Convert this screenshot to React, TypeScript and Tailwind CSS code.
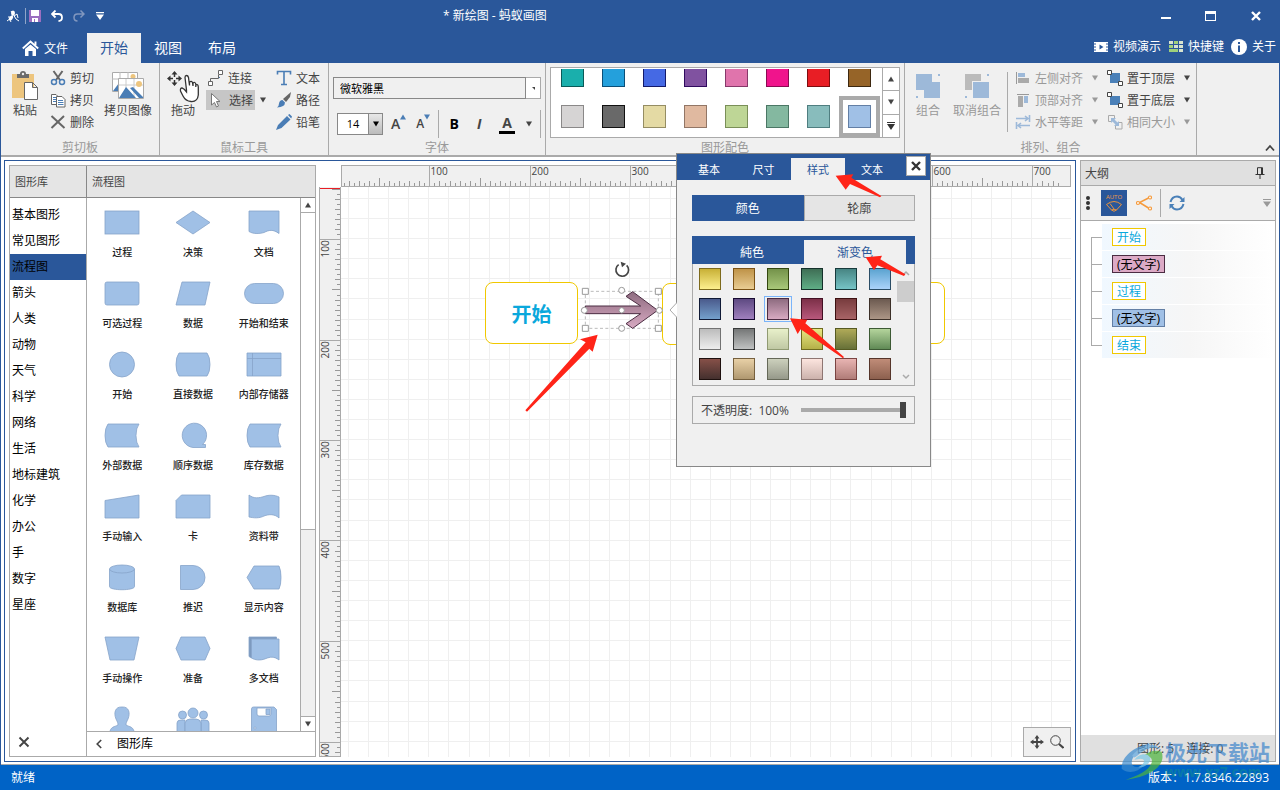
import type { ReactNode } from 'react'

const ribbonColors = [
  ['#1aafac', '#0a5a58'], ['#24a0dc', '#0b4f78'], ['#4569e4', '#131a6a'], ['#8052a0', '#2f0a5e'],
  ['#e074ac', '#86396a'], ['#f0148c', '#8a0a52'], ['#e81e25', '#7d0d10'], ['#966428', '#3d2810'],
  ['#d6d4d4', '#8a8888'], ['#696969', '#111111'], ['#e4daa4', '#958d63'], ['#e0b9a0', '#927666'],
  ['#bed696', '#7a8f58'], ['#84b8a0', '#4b7765'], ['#88bcbc', '#4f7e80'], ['#a0c0e6', '#637fa5'],
]

const gradients = [
  ['#c8b036', '#fdf08e', '#7d6a1c'], ['#bf9348', '#e9cd94', '#7a5216'], ['#74924a', '#a9c87a', '#33470f'],
  ['#3f6e55', '#5fae86', '#14302a'], ['#478583', '#76c4c6', '#173a3c'], ['#5ba3d0', '#abd3fa', '#2b4d66'],
  ['#4a5a8c', '#74a0cc', '#101a36'], ['#5e4a82', '#a080be', '#160a30'], ['#8e6c80', '#d8aac2', '#4b2c42'],
  ['#7c3048', '#b8587c', '#420f22'], ['#783c3e', '#a86466', '#3c1010'], ['#6c5a50', '#ac9686', '#3c3028'],
  ['#bcbcbc', '#eeeeee', '#727272'], ['#757777', '#c0c2c2', '#383a3a'], ['#e8f0ca', '#c0c8a4', '#909a72'],
  ['#e8e682', '#b4b048', '#6e6a1e'], ['#b0aa58', '#667038', '#565a22'], ['#b4d49c', '#608a56', '#3d5a34'],
  ['#865048', '#44302e', '#1e100e'], ['#e8d0a6', '#b09870', '#76603e'], ['#ccd0bc', '#96998a', '#656858'],
  ['#fce4de', '#ccb2ac', '#8e7672'], ['#e8b4b2', '#b07c78', '#7a4442'], ['#c08c78', '#8c604e', '#56352a'],
]

const categories = [
  '基本图形', '常见图形', '流程图', '箭头', '人类', '动物', '天气', '科学',
  '网络', '生活', '地标建筑', '化学', '办公', '手', '数字', '星座',
]

const storedData = <path d="M6 1H37Q34 5 34 12.5T37 24H6Q3 20 3 12.5T6 1Z" />

const shapes: { name: string; art: ReactNode }[] = [
  { name: '过程', art: <rect x="3" y="1" width="34" height="23" /> },
  { name: '决策', art: <path d="M3 12.5L20 1L37 12.5L20 24Z" /> },
  { name: '文档', art: <path d="M5 1H35V23.5C29 19 25 20 20 22.5C15 24 9 24 5 21.5Z" /> },
  { name: '可选过程', art: <rect x="3" y="1" width="34" height="23" rx="2" /> },
  { name: '数据', art: <path d="M9 1H37L32 24H3Z" /> },
  { name: '开始和结束', art: <rect x="0.5" y="2.5" width="39" height="20" rx="10" /> },
  { name: '开始', art: <circle cx="20" cy="12.5" r="12.5" /> },
  { name: '直接数据', art: <path d="M6 1H34Q37 5 37 12.5T34 24H6Q3 20 3 12.5T6 1Z" /> },
  { name: '内部存储器', art: <path d="M3 1H37V24H3ZM8.500 1V24M3 6.500H37" /> },
  { name: '外部数据', art: storedData },
  { name: '顺序数据', art: <path d="M20 24.500A12.200 12.200 0 1 1 29.500 21.500H32.500V24.500Z" /> },
  { name: '库存数据', art: storedData },
  { name: '手动输入', art: <path d="M3 6.500L37 1V24H3Z" /> },
  { name: '卡', art: <path d="M8.500 1H37V24H3V6.500Z" /> },
  { name: '资料带', art: <path d="M5 1C10 5 15 4 20 2.500C25 .5 31 1 35 3V24C31 20 25 20 20 22C15 24.500 10 24 5 23Z" /> },
  {
    name: '数据库',
    art: (
      <>
        <path d="M7.500 4V21.500C7.500 25.800 32.500 25.800 32.500 21.500V4" />
        <ellipse cx="20" cy="4" rx="12.500" ry="4" />
      </>
    ),
  },
  { name: '推迟', art: <path d="M7.500 .5H20A12 12 0 0 1 20 24.500H7.500Z" /> },
  { name: '显示内容', art: <path d="M3 12.500L10 1H35Q37 5 37 12.500T35 24H10Z" /> },
  { name: '手动操作', art: <path d="M3 1H37L32 24H8Z" /> },
  { name: '准备', art: <path d="M8 1H32L37 12.500L32 24H8L3 12.500Z" /> },
  {
    name: '多文档',
    art: (
      <>
        <path d="M5 1H32.500V3H7.500V22L5 20.500Z" fill="#7d9abf" />
        <path d="M7.500 3H35V24C30 20 26 21 22 22.500C16 25 11 24 7.500 22Z" />
      </>
    ),
  },
]

const moreShapes: { id: string; art: ReactNode }[] = [
  {
    id: 'person',
    art: <path d="M20 0C27-.5 28.500 6 26 12C24.500 15 24 16 24 18C27 20 32 19 32.500 27H7.500C8 19 13 20 16 18C16 16 15.500 15 14 12C11.500 6 13-.5 20 0Z" />,
  },
  {
    id: 'team',
    art: (
      <>
        <circle cx="9.500" cy="8" r="4" />
        <circle cx="30.500" cy="8" r="4" />
        <path d="M4 27V16Q4 13 8 13H12V27ZM36 27V16Q36 13 32 13H28V27Z" />
        <circle cx="20" cy="6" r="5" />
        <path d="M12 27V16Q13 12 17 12H23Q27 12 28 16V27Z" />
      </>
    ),
  },
  {
    id: 'disk',
    art: (
      <>
        <path d="M9.500 0H30L32.500 2.500V27H7.500V2Q7.500 0 9.500 0Z" />
        <path d="M13 1H27V7Q27 9 25 9H15Q13 9 13 7Z" fill="#fff" />
        <path d="M22 2H26V7.500H22Z" />
        <circle cx="11" cy="21" r="1" fill="#fff" />
      </>
    ),
  },
]

const outline = [
  { id: 1, text: '开始', look: 'border-[#f0c800] bg-white text-[#0aa8dc]' },
  { id: 2, text: '(无文字)', look: 'border-[#4b2c42] bg-[#dcaac6] text-black' },
  { id: 3, text: '过程', look: 'border-[#f0c800] bg-white text-[#0aa8dc]' },
  { id: 4, text: '(无文字)', look: 'border-[#637fa5] bg-[#a0c0e6] text-black' },
  { id: 5, text: '结束', look: 'border-[#f0c800] bg-white text-[#0aa8dc]' },
]

const UNIT = 1.005
const steps = (n: number) => Array.from({ length: n }, (_, i) => i)

function Caret({ up, className = 'text-[#444]' }: { up?: boolean; className?: string }) {
  return (
    <svg className={`h-1.5 w-1.5 shrink-0 ${className}`} viewBox="0 0 6 6" fill="currentColor" aria-hidden>
      <path d={up ? 'M3 .5L6 5.500H0Z' : 'M0 .5H6L3 5.500Z'} />
    </svg>
  )
}

function Icon({ size = 'h-4 w-4', box = '0 0 16 16', children }: { size?: string; box?: string; children: ReactNode }) {
  return (
    <svg className={`${size} shrink-0`} viewBox={box} fill="none" aria-hidden>
      {children}
    </svg>
  )
}

function Group({ title, className, children }: { title: string; className: string; children: ReactNode }) {
  return (
    <section className={`flex shrink-0 flex-col border-r border-[#aaa] ${className}`}>
      <div className="flex flex-1">{children}</div>
      <h2 className="text-center leading-[14px] text-[#999]">{title}</h2>
    </section>
  )
}

function RowButton({ icon, label, muted, menu }: { icon: ReactNode; label: string; muted?: boolean; menu?: boolean }) {
  return (
    <button className={`flex h-[22px] items-center gap-1 whitespace-nowrap ${muted ? 'text-[#999]' : 'text-[#444]'}`}>
      {icon}
      <span className="pt-0.5">{label}</span>
      {menu && <span className="ml-[5px]"><Caret className={muted ? 'text-[#999]' : 'text-[#444]'} /></span>}
    </button>
  )
}

function BigButton({ icon, label, className, muted }: { icon: ReactNode; label: string; className: string; muted?: boolean }) {
  return (
    <button className={`flex shrink-0 flex-col items-center self-start whitespace-nowrap pt-2 ${muted ? 'text-[#999]' : 'text-[#444]'} ${className}`}>
      <span className="flex h-8 items-start">{icon}</span>
      <span className="leading-4">{label}</span>
    </button>
  )
}

function Header() {
  return (
    <header className="text-white">
      <div className="flex h-[33px] items-center pb-0.5">
        <div className="flex w-[443px] shrink-0 items-center pl-[6px]">
          <Icon size="h-[14px] w-[14px]" box="0 0 14 14">
            <path d="M1 12L5 9L7 5M4 8L2 8M7 5L5 2M7 5L10 10L13 12M8 7L11 5L12 9M4 11L5 13" stroke="#fff" />
            <ellipse cx="7" cy="4" rx="2" ry="2.500" fill="#fff" />
            <ellipse cx="5" cy="9" rx="1.800" ry="2.800" fill="#fff" transform="rotate(35 5 9)" />
          </Icon>
          <span className="ml-[5px] mr-[3px] h-4 w-px bg-[#8fa5c9]" />
          <button aria-label="保存">
            <Icon size="h-3 w-3" box="0 0 12 12">
              <path d="M0 0H12V12H0Z" fill="#9b6fc0" />
              <path d="M2 0H10V6H2ZM3 8H9V12H3Z" fill="#fff" />
              <path d="M5 9H6V12H5Z" fill="#9b6fc0" />
            </Icon>
          </button>
          <button aria-label="撤销" className="ml-[10px]">
            <Icon size="h-3 w-3" box="0 0 12 12">
              <path d="M1 4H7.500Q11 4 11 7.500T7.500 11M4.500 .5L1 4L4.500 7.500" stroke="#fff" strokeWidth="1.800" />
            </Icon>
          </button>
          <button aria-label="重做" className="ml-[10px]">
            <Icon size="h-3 w-3" box="0 0 12 12">
              <path d="M11 4H4.500Q1 4 1 7.500T4.500 11M7.500 .5L11 4L7.500 7.500" stroke="#8197bf" strokeWidth="1.500" />
            </Icon>
          </button>
          <button aria-label="自定义快速访问" className="ml-[11px]">
            <Icon size="h-2 w-2" box="0 0 8 8">
              <path d="M0 0H8V1.200H0ZM0 2.500H8L4 8Z" fill="#fff" />
            </Icon>
          </button>
        </div>
        <h1 className="whitespace-nowrap">* 新绘图 - 蚂蚁画图</h1>
        <div className="ml-auto flex self-stretch pr-0.5">
          <button aria-label="最小化" className="flex w-[45px] items-center justify-center">
            <span className="mt-1 h-0.5 w-[10px] bg-white" />
          </button>
          <button aria-label="最大化" className="flex w-[45px] items-center justify-center">
            <span className="h-[10px] w-[11px] border border-t-[3px] border-white" />
          </button>
          <button aria-label="关闭" className="flex w-[45px] items-center justify-center">
            <Icon size="h-[10px] w-[10px]" box="0 0 10 10">
              <path d="M1 1L9 9M9 1L1 9" stroke="#fff" strokeWidth="2.400" />
            </Icon>
          </button>
        </div>
      </div>
      <nav className="flex h-[30px] text-sm">
        <button className="flex w-[87px] items-center gap-[5px] pl-[22px] text-xs">
          <Icon size="h-4 w-[17px]" box="0 0 17 16">
            <path d="M.8 8.500L8.500 1.500L16.200 8.500M13.500 5V1.500" stroke="#fff" strokeWidth="1.900" />
            <path d="M3 9L8.500 4.500L14 9V16H10.500V11H6.500V16H3Z" fill="#fff" />
          </Icon>
          <span className="pt-0.5">文件</span>
        </button>
        <button className="w-[54px] bg-[#f0f0f0] text-[#2a579a]">开始</button>
        <button className="w-[54px]">视图</button>
        <button className="w-[54px]">布局</button>
        <div className="ml-auto flex items-center whitespace-nowrap pb-0.5 pr-1 text-xs">
          <a href="#video" className="flex items-center gap-[5px]">
            <Icon size="h-[10px] w-[14px]" box="0 0 14 10">
              <path d="M0 0H14V10H0Z" fill="#fff" />
              <path d="M0 2H2M0 5H2M0 8H2M12 2H14M12 5H14M12 8H14" stroke="#2a579a" />
              <path d="M5.500 2.500L9.500 5L5.500 7.500Z" fill="#2a579a" />
            </Icon>
            视频演示
          </a>
          <a href="#keys" className="ml-2 flex items-center gap-[5px]">
            <Icon size="h-3 w-[14px]" box="0 0 14 12">
              <path d="M0 0H4V3H0ZM10 0H14V3H10ZM5 4H9V7H5ZM10 4H14V7H10ZM10 8H14V11H10Z" fill="#d8e4d0" />
              <path d="M5 0H9V3H5ZM0 4H4V7H0ZM0 8H9V11H0Z" fill="#9fd07a" />
            </Icon>
            快捷键
          </a>
          <a href="#about" className="ml-[7px] flex items-center gap-[5px]">
            <Icon>
              <circle cx="8" cy="8" r="8" fill="#fff" />
              <path d="M7 3H9V5H7ZM7 6.500H9V13H7Z" fill="#2a579a" />
            </Icon>
            关于
          </a>
        </div>
      </nav>
    </header>
  )
}

function ClipboardGroup() {
  return (
    <Group title="剪切板" className="w-[159px]">
      <BigButton
        label="粘贴"
        className="ml-1.5 w-9"
        icon={
          <Icon size="h-[30px] w-[26px]" box="0 0 26 30">
            <path d="M0 3H22V27H0Z" fill="#edc57e" />
            <path d="M5 3H8Q8 0 11 0T14 3H17V7H5Z" fill="#6b6b6b" />
            <circle cx="11" cy="3" r="1.200" fill="#f0f0f0" />
            <path d="M12.500 11.500H20.500L25.500 16.500V28.500H12.500ZM20.500 11.500V16.500H25.500" fill="#fff" stroke="#666" />
          </Icon>
        }
      />
      <div className="ml-[7px] pt-1">
        <RowButton
          label="剪切"
          icon={
            <Icon>
              <path d="M3.500 1L10 10M12.500 1L6 10" stroke="#666" strokeWidth="2" />
              <circle cx="4" cy="12" r="2.500" stroke="#4a7db5" strokeWidth="1.500" />
              <circle cx="12" cy="12" r="2.500" stroke="#4a7db5" strokeWidth="1.500" />
            </Icon>
          }
        />
        <RowButton
          label="拷贝"
          icon={
            <Icon>
              <path d="M1.500 2.500H6L8.500 5V12.500H1.500Z" fill="#fff" stroke="#666" />
              <path d="M3 5.500H6M3 7.500H6M3 9.500H6" stroke="#4a7db5" />
              <path d="M6.500 4.500H12L15 7.500V15H6.500Z" fill="#fff" stroke="#666" />
              <path d="M8 8.500H13M8 10.500H13.500M8 12.500H13.500" stroke="#4a7db5" />
            </Icon>
          }
        />
        <RowButton
          label="删除"
          icon={
            <Icon>
              <path d="M1.500 2L14.500 14M14 2L1.500 14" stroke="#666" strokeWidth="2" />
            </Icon>
          }
        />
      </div>
      <BigButton
        label="拷贝图像"
        className="ml-[10px] w-12"
        icon={
          <Icon size="h-[30px] w-8" box="0 0 32 30">
            <path d="M.5 1.500H25.500V20.500H.5Z" fill="#fff" stroke="#aaa" />
            <path d="M8 1V21M16 1V21M0 8H26" stroke="#bbb" />
            <circle cx="21" cy="5.500" r="2.500" fill="#edc57e" />
            <path d="M1 20L7 12V20Z" fill="#4a7db5" />
            <path d="M6.500 7.500H31.500V27.500H6.500Z" fill="#fff" stroke="#aaa" />
            <path d="M14 8V27M22 8V27M7 14H31" stroke="#ccc" />
            <circle cx="27" cy="13" r="3" fill="#edc57e" />
            <path d="M7 27L14 16L24 27ZM18 17L21 16L31 26V27H27Z" fill="#4a7db5" />
          </Icon>
        }
      />
    </Group>
  )
}

function MouseGroup() {
  return (
    <Group title="鼠标工具" className="w-[169px]">
      <BigButton
        label="拖动"
        className="ml-1.5 w-[34px]"
        icon={
          <Icon size="h-8 w-8" box="0 0 32 32">
            <path d="M7.500 0L10.500 3.500H4.500ZM7.500 15L10.500 11.500H4.500ZM0 7.500L3.500 4.500V10.500ZM15 7.500L11.500 4.500V10.500Z" fill="#333" />
            <path d="M7.500 3V6M7.500 9V12M3 7.500H6M9 7.500H12" stroke="#333" strokeWidth="1.500" />
            <path
              d="M19.500 19L18 6.500Q18 4.500 19.500 4.500T21.500 6.500L22.500 14.500V11Q24.500 9.500 25.500 11.500L26 15V12Q28 10.500 28.800 13V16V14Q31 12.500 31.300 16V24Q30.500 31 24 30.500Q18.500 30 16 25L13.500 20Q13 17 15 17L17.500 18.500L19.500 21Z"
              fill="#fff"
              stroke="#333"
              strokeWidth="1.300"
            />
          </Icon>
        }
      />
      <div className="ml-1.5 pt-1 text-[#444]">
        <button className="flex h-[22px] items-center gap-1 pl-0.5">
          <Icon>
            <path d="M2.500 12V8.500H10.500V5" stroke="#666" />
            <path d="M.5 11.500H4.500V15.500H.5ZM10.500 .5H14.500V4.500H10.500Z" fill="#fff" stroke="#666" />
            <path d="M11 7H12V8H11Z" fill="#4a7db5" />
          </Icon>
          <span className="pt-0.5">连接</span>
        </button>
        <div className="flex items-center">
          <button className="my-px flex h-5 w-[49px] items-center gap-[5px] whitespace-nowrap bg-[#c6c6c6] pl-0.5">
            <Icon>
              <path d="M3.500 1.500V13L6.500 10.500L8.500 15L10.500 14L8.500 9.500H12Z" fill="#fff" stroke="#777" />
            </Icon>
            <span className="pt-0.5">选择</span>
          </button>
          <button aria-label="选择方式" className="ml-[5px]"><Caret /></button>
        </div>
      </div>
      <div className="ml-[10px] pt-1">
        <RowButton
          label="文本"
          icon={
            <Icon>
              <path d="M1.500 4.500V1.500H14.500V4.500M8 2V14.500M5 14.500H11" stroke="#4a7db5" strokeWidth="1.600" />
            </Icon>
          }
        />
        <RowButton
          label="路径"
          icon={
            <Icon>
              <path d="M15 0L14 5L10 10L7 7Z" fill="#666" />
              <path d="M6.500 8L9 10.500Q9 15 1 15.500Q3 14 3 11.500Q3.500 8 6.500 8Z" fill="#4a7db5" />
            </Icon>
          }
        />
        <RowButton
          label="铅笔"
          icon={
            <Icon>
              <path d="M0 16L2 11L11 2L14.500 5.500L5.500 14ZM12 1L13.500 0L16 2.500L15.200 4.500Z" fill="#4a7db5" />
            </Icon>
          }
        />
      </div>
    </Group>
  )
}

function FontGroup() {
  return (
    <Group title="字体" className="w-[217px]">
      <div className="flex flex-1 flex-col pt-3.5">
        <div className="ml-1 mr-1 flex h-[22px]">
          <select aria-label="字体" className="min-w-0 flex-1 appearance-none border border-[#888] bg-[#f0f0f0] pl-1.5 pt-0.5 text-[11px] text-black">
            <option>微软雅黑</option>
          </select>
          <span className="flex w-[15px] items-center justify-center border border-l-0 border-[#aaa] bg-white">
            <span className="h-0 w-0 border-l-[3px] border-t-[3px] border-l-transparent border-t-[#444]" />
          </span>
        </div>
        <div className="mt-[11px] flex h-7 items-center pl-2 pr-1 text-[#444]">
          <div className="flex h-[22px] w-[46px] border border-[#888] bg-white">
            <input aria-label="字号" defaultValue="14" className="w-[30px] min-w-0 text-center text-[11px] text-black" />
            <button aria-label="字号列表" className="flex flex-1 items-center justify-center border-l border-[#888] bg-gradient-to-b from-[#e8e8e8] to-[#bbb]">
              <Caret className="text-black" />
            </button>
          </div>
          <button aria-label="增大字号" className="ml-2 flex items-start">
            <span className="text-sm font-semibold leading-5">A</span>
            <Caret up className="text-[#4a7db5]" />
          </button>
          <button aria-label="减小字号" className="ml-[10px] flex items-start">
            <span className="text-xs font-semibold leading-5">A</span>
            <Caret className="text-[#4a7db5]" />
          </button>
          <span className="ml-2 h-7 w-px bg-[#aaa]" />
          <button className="ml-[9px] w-3 text-sm font-bold text-black">B</button>
          <button className="ml-3.5 w-2.5 text-sm font-bold italic">I</button>
          <button className="ml-[15px] flex w-4 flex-col items-center">
            <span className="text-sm font-bold leading-4">A</span>
            <span className="h-[3px] w-4 bg-black" />
          </button>
          <button aria-label="文字颜色" className="ml-[11px]"><Caret /></button>
          <span className="ml-auto h-7 w-px bg-[#aaa]" />
        </div>
      </div>
    </Group>
  )
}

function ColorGroup() {
  return (
    <Group title="图形配色" className="w-[359px]">
      <div className="ml-1 mt-1 flex h-[71px] w-[350px] border border-[#aaa] bg-white">
        <div className="mt-px flex flex-1 flex-col justify-end overflow-hidden pl-px">
          <div className="grid grid-cols-[repeat(8,41px)]">
            {ribbonColors.map(([fill, edge], i) => (
              <button
                key={fill}
                aria-label={`配色 ${i + 1}`}
                className={`flex h-[41px] items-center justify-center ${i === 15 ? 'border-4 border-[#aaa]' : ''}`}
              >
                <span className="h-[23px] w-[23px] border" style={{ background: fill, borderColor: edge }} />
              </button>
            ))}
          </div>
        </div>
        <div className="flex w-[17px] flex-col divide-y divide-[#aaa] border-l border-[#aaa]">
          <button aria-label="上一行" className="flex flex-1 items-center justify-center"><Caret up /></button>
          <button aria-label="下一行" className="flex flex-1 items-center justify-center"><Caret /></button>
          <button aria-label="更多配色" className="flex flex-1 items-center justify-center">
            <Icon size="h-2 w-2" box="0 0 8 8"><path d="M0 0H8V1H0ZM0 2H8L4 8Z" fill="#333" /></Icon>
          </button>
        </div>
      </div>
    </Group>
  )
}

function AlignIcon({ kind }: { kind: 'left' | 'top' | 'space' | 'front' | 'back' | 'size' }) {
  return (
    <Icon>
      {kind === 'left' && (
        <>
          <path d="M1.500 2V14" stroke="#999" />
          <path d="M3 3H10V7H3Z" fill="#9db9d9" />
          <path d="M3 8H14V13H3Z" fill="#aaa" />
        </>
      )}
      {kind === 'top' && (
        <>
          <path d="M2 2.500H14" stroke="#999" />
          <path d="M3 4H8V15H3Z" fill="#aaa" />
          <path d="M9 4H13V11H9Z" fill="#9db9d9" />
        </>
      )}
      {kind === 'space' && (
        <path d="M1 4.500H13M10 2L13 4.500L10 7M14.500 1V8M15 11.500H3M6 9L3 11.500L6 14M1.500 8V15" stroke="#9db9d9" strokeWidth="1.600" />
      )}
      {kind === 'front' && <path d="M3 3H13V13H3Z" fill="#4a80b8" />}
      {kind === 'back' && <path d="M3 4H13V13H3Z" fill="#4a80b8" />}
      {(kind === 'front' || kind === 'back') && (
        <path d="M.5 .5H4.500V4.500H.5ZM11.500 11.500H15.500V15.500H11.500Z" fill="#fff" stroke="#444" />
      )}
      {kind === 'size' && (
        <>
          <path d="M7.500 4V1.500H1.500V7.500H4M8.500 11V15H15V8.500H12" stroke="#aaa" />
          <path d="M4 4H9L7.500 5.500L10.500 8.500L12 7V12H7L8.500 10.500L5.500 7.500L4 9Z" fill="#9db9d9" />
        </>
      )}
    </Icon>
  )
}

function ArrangeGroup() {
  return (
    <Group title="排列、组合" className="w-[292px]">
      <BigButton
        label="组合"
        muted
        className="ml-[7px] w-8"
        icon={
          <Icon size="mt-[3px] h-6 w-6" box="0 0 24 24">
            <path d="M0 0H16V8H24V24H8V16H0ZM22 0H24V2H22ZM0 22H2V24H0Z" fill="#9db9d9" />
          </Icon>
        }
      />
      <BigButton
        label="取消组合"
        muted
        className="ml-[9px] w-12"
        icon={
          <Icon size="mt-[3px] h-6 w-6" box="0 0 24 24">
            <path d="M0 0H16V7H7V16H0Z" fill="#bbb" />
            <path d="M8 8H24V24H8ZM22 0H24V2H22ZM0 22H2V24H0Z" fill="#9db9d9" />
          </Icon>
        }
      />
      <span className="ml-1.5 mt-[9px] h-[60px] w-px bg-[#aaa]" />
      <div className="ml-[7px] pt-1">
        <RowButton label="左侧对齐" muted menu icon={<AlignIcon kind="left" />} />
        <RowButton label="顶部对齐" muted menu icon={<AlignIcon kind="top" />} />
        <RowButton label="水平等距" muted menu icon={<AlignIcon kind="space" />} />
      </div>
      <div className="ml-[9px] pt-1">
        <RowButton label="置于顶层" menu icon={<AlignIcon kind="front" />} />
        <RowButton label="置于底层" menu icon={<AlignIcon kind="back" />} />
        <RowButton label="相同大小" muted menu icon={<AlignIcon kind="size" />} />
      </div>
    </Group>
  )
}

function Ribbon() {
  return (
    <div className="mx-px flex h-[94px] shrink-0 border-b-2 border-[#aaa] bg-[#f0f0f0]">
      <ClipboardGroup />
      <MouseGroup />
      <FontGroup />
      <ColorGroup />
      <ArrangeGroup />
      <button aria-label="折叠功能区" className="mb-[3px] ml-auto mr-1 self-end">
        <Icon size="h-2 w-[10px]" box="0 0 10 8">
          <path d="M1 6.500L5 2L9 6.500" stroke="#444" strokeWidth="1.800" />
        </Icon>
      </button>
    </div>
  )
}

function Library() {
  return (
    <aside className="flex w-[307px] shrink-0 flex-col border border-[#aaa]">
      <div className="flex h-8 shrink-0 border-b border-[#888] bg-[#e5e5e5] text-[11px] text-[#444]">
        <h2 className="flex w-[77px] items-center border-r border-[#888] pl-[5px] pt-0.5">图形库</h2>
        <h2 className="flex items-center pl-[5px] pt-0.5">流程图</h2>
      </div>
      <div className="flex min-h-0 flex-1">
        <div className="flex w-[77px] shrink-0 flex-col border-r border-[#aaa] pt-1">
          {categories.map((name) => (
            <button
              key={name}
              className={`h-[26px] pl-0.5 text-left text-black ${name === '流程图' ? 'bg-[#2a579a]' : ''}`}
            >
              {name}
            </button>
          ))}
          <button aria-label="关闭图形库" className="mb-2 ml-2 mt-auto self-start">
            <Icon size="h-3 w-3" box="0 0 12 12">
              <path d="M1.500 1.500L10.500 10.500M10.500 1.500L1.500 10.500" stroke="#444" strokeWidth="1.900" />
            </Icon>
          </button>
        </div>
        <div className="flex min-w-0 flex-1 flex-col">
          <div className="flex min-h-0 flex-1">
            <div className="grid flex-1 auto-rows-[71px] grid-cols-3 overflow-hidden pr-px text-[10px] text-[#222]">
              {shapes.map((shape) => (
                <button key={shape.name} className="flex flex-col items-center pt-3">
                  <svg className="h-[25px] w-10 overflow-visible" viewBox="0 0 40 25" fill="#a0c0e6" stroke="#86a3c9" strokeWidth="0.800" aria-hidden>
                    {shape.art}
                  </svg>
                  <span className="mt-[9px] whitespace-nowrap font-medium leading-4">{shape.name}</span>
                </button>
              ))}
              {moreShapes.map((shape) => (
                <button key={shape.id} aria-label={shape.id} className="flex flex-col items-center pt-3">
                  <svg className="h-[25px] w-10 overflow-visible" viewBox="0 0 40 25" fill="#a0c0e6" stroke="#86a3c9" strokeWidth="0.800" aria-hidden>
                    {shape.art}
                  </svg>
                </button>
              ))}
            </div>
            <div className="flex w-[15px] shrink-0 flex-col border-l border-[#aaa] bg-[#f0f0f0]">
              <button aria-label="向上滚动" className="flex h-[15px] items-center justify-center border-b border-[#aaa] bg-white"><Caret up /></button>
              <div className="flex-1"><div className="h-[63%] border-b border-[#aaa] bg-white" /></div>
              <button aria-label="向下滚动" className="flex h-[15px] items-center justify-center border-t border-[#aaa] bg-white"><Caret /></button>
            </div>
          </div>
          <button className="flex h-[25px] shrink-0 items-center gap-[15px] border-t border-[#aaa] pl-[9px] text-black">
            <Icon size="h-[10px] w-1.5" box="0 0 6 10">
              <path d="M5.200 1L1.200 5L5.200 9" stroke="#444" strokeWidth="1.600" />
            </Icon>
            图形库
          </button>
        </div>
      </div>
    </aside>
  )
}

function TopRuler() {
  return (
    <svg className="block h-[22px] w-full border border-[#aaa] bg-[#f0f0f0] text-[10px]" shapeRendering="crispEdges" aria-hidden>
      {steps(146).map((i) => {
        const x = Math.round((i * 5 - 10) * UNIT - 3) + 0.5
        const len = i % 20 === 0 ? 0 : i % 10 === 0 ? 8 : i % 2 ? 3 : 5
        return len > 0 && <path key={i} d={`M${x} 20V${20 - len}`} stroke="#999" />
      })}
      {steps(7).map((i) => {
        const x = Math.round(87 + i * 100 * UNIT) + 0.5
        return (
          <g key={i}>
            <path d={`M${x} 0V20`} stroke="#aaa" />
            <text x={x + 1} y="9" fill="#444">{(i + 1) * 100}</text>
          </g>
        )
      })}
    </svg>
  )
}

function SideRuler() {
  return (
    <svg className="block h-full w-[22px] shrink-0 border border-[#aaa] border-t-0 bg-[#f0f0f0] text-[10px]" shapeRendering="crispEdges" aria-hidden>
      <path d="M0 1H20" stroke="#e81e25" strokeWidth="1" />
      {steps(116).map((i) => {
        const y = Math.round(2 + i * 5 * UNIT) + 0.5
        const len = i % 20 === 10 ? 0 : i % 10 === 0 ? 8 : i % 2 ? 3 : 5
        return len > 0 && <path key={i} d={`M20 ${y}H${20 - len}`} stroke="#999" />
      })}
      {steps(6).map((i) => {
        const y = Math.round(52 + i * 100 * UNIT) + 0.5
        return (
          <g key={i}>
            <path d={`M0 ${y}H20`} stroke="#aaa" />
            <text transform={`translate(9 ${y + 18}) rotate(-90)`} fill="#444">{(i + 1) * 100}</text>
          </g>
        )
      })}
    </svg>
  )
}

function Grid() {
  return (
    <svg className="absolute inset-0 h-full w-full" shapeRendering="crispEdges" stroke="#efefef" aria-hidden>
      {steps(100).map((i) => {
        const x = Math.round(7 + i * 20 * UNIT) + 0.5
        return <line key={i} x1={x} x2={x} y1="0" y2="100%" />
      })}
      {steps(60).map((i) => {
        const y = Math.round(11 + i * 20 * UNIT) + 0.5
        return <line key={i} y1={y} y2={y} x1="0" x2="100%" />
      })}
    </svg>
  )
}

function SelectedArrow() {
  return (
    <svg className="absolute left-[129px] top-[68px] h-[170px] w-[220px]" viewBox="0 0 660 510" fill="none" aria-hidden>
      <defs>
        <linearGradient id="mauve" x1="0" x2="0" y1="0" y2="1">
          <stop offset="0" stopColor="#8e6c80" />
          <stop offset="1" stopColor="#d8aac2" />
        </linearGradient>
      </defs>
      <rect x="346" y="109" width="219" height="111" stroke="#bbb" strokeWidth="3" strokeDasharray="9 7" />
      <path d="M346 153H512L468 124L488 110L563 166L488 220L468 206L512 176H346Z" fill="url(#mauve)" stroke="#4b2c42" strokeWidth="3" />
      <g fill="#fff" stroke="#999" strokeWidth="3">
        <path d="M337 100H355V118H337ZM556 100H574V118H556ZM337 211H355V229H337ZM556 211H574V229H556Z" />
        <circle cx="455" cy="106" r="9" />
        <circle cx="455" cy="220" r="9" />
        <circle cx="343" cy="166" r="9" />
        <circle cx="568" cy="166" r="9" />
        <circle cx="455" cy="166" r="8" />
      </g>
      <path d="M446 29A19 19 0 1 0 470 31" stroke="#444" strokeWidth="5" />
      <path d="M452 20L468 26L456 37Z" fill="#444" />
      <path d="M166 466L347 262L330 253L383 239L368 290L358 281L171 470Z" fill="#ff2418" />
    </svg>
  )
}

function StylePopup() {
  return (
    <div className="absolute -top-[34px] left-[335px] z-10 flex h-[314px] w-[255px] flex-col border border-[#888] bg-[#f0f0f0]">
      <svg className="absolute -left-2 top-[148px] h-4 w-2" viewBox="0 0 8 16" fill="#fff" stroke="#aaa" aria-hidden>
        <path d="M8 .5L1 8L8 15.500" />
      </svg>
      <div className="flex h-[26px] items-start bg-[#2a579a] pl-[5px] pr-1 text-[11px] text-white">
        <button className="mt-1 h-[22px] w-[54px] pt-0.5">基本</button>
        <button className="mt-1 h-[22px] w-[55px] pt-0.5">尺寸</button>
        <button className="mt-1 h-[22px] w-[54px] bg-[#f0f0f0] pt-0.5 text-[#2a579a]">样式</button>
        <button className="mt-1 h-[22px] w-[54px] pt-0.5">文本</button>
        <button aria-label="关闭" className="ml-auto mt-0.5 flex h-5 w-5 items-center justify-center border border-[#aaa] bg-white">
          <Icon size="h-[10px] w-[10px]" box="0 0 10 10">
            <path d="M1 1L9 9M9 1L1 9" stroke="#333" strokeWidth="2.400" />
          </Icon>
        </button>
      </div>
      <div className="flex flex-col px-[15px] pt-[15px]">
        <div className="grid h-[26px] grid-cols-2">
          <button className="bg-[#2a579a] pt-0.5 text-white">颜色</button>
          <button className="border border-[#aaa] bg-[#e5e5e5] pt-0.5 text-[#444]">轮廓</button>
        </div>
        <div className="mt-[15px] flex h-7 items-end bg-[#2a579a] pr-[9px] text-white">
          <button className="h-6 w-28 pr-0 pl-2 pt-0.5">純色</button>
          <button className="h-6 flex-1 bg-[#f0f0f0] pt-0.5 text-[#2a579a]">渐变色</button>
        </div>
        <div className="flex h-[122px] border border-t-0 border-[#aaa]">
          <div className="grid flex-1 auto-rows-[30px] grid-cols-[repeat(6,34px)]">
            {gradients.map(([from, to, edge], i) => (
              <button
                key={edge}
                aria-label={`渐变 ${i + 1}`}
                className={`ml-[3px] flex h-[26px] w-7 items-center justify-center self-center ${i === 8 ? 'border border-[#7ab4fa]' : ''}`}
              >
                <span
                  className="h-[22px] w-[22px] border"
                  style={{ background: `linear-gradient(${from}, ${to})`, borderColor: edge }}
                />
              </button>
            ))}
          </div>
          <div className="flex w-[17px] flex-col items-center">
            <button aria-label="向上滚动" className="flex h-[17px] items-center">
              <Icon size="h-2 w-2" box="0 0 8 8"><path d="M1 6L4 3L7 6" stroke="#aaa" strokeWidth="1.500" /></Icon>
            </button>
            <div className="w-full flex-1"><div className="h-[21px] bg-[#cdcdcd]" /></div>
            <button aria-label="向下滚动" className="flex h-[17px] items-center">
              <Icon size="h-2 w-2" box="0 0 8 8"><path d="M1 2L4 5L7 2" stroke="#aaa" strokeWidth="1.500" /></Icon>
            </button>
          </div>
        </div>
        <div className="mt-[10px] flex h-7 items-center border border-[#aaa] pl-2 pr-2 text-[#444]">
          <label htmlFor="opacity" className="whitespace-nowrap pt-0.5">不透明度: &nbsp;100%</label>
          <input
            id="opacity"
            type="range"
            defaultValue={100}
            className="ml-auto h-4 w-[105px] appearance-none bg-transparent [&::-webkit-slider-runnable-track]:h-1 [&::-webkit-slider-runnable-track]:bg-[#aaa] [&::-webkit-slider-thumb]:-mt-1.5 [&::-webkit-slider-thumb]:h-4 [&::-webkit-slider-thumb]:w-1.5 [&::-webkit-slider-thumb]:appearance-none [&::-webkit-slider-thumb]:bg-[#444]"
          />
        </div>
      </div>
      <svg className="pointer-events-none absolute -left-px -top-px h-[314px] w-[255px]" viewBox="18 24 765 942" fill="#ff2418" aria-hidden>
        <path d="M497 92L550 88L544 98L634 153L630 157L540 117L527 134Z" />
        <path d="M587 337L636 332L631 343L706 388L702 393L622 361L612 376Z" />
        <path d="M360 520L412 524L406 535L522 636L519 640L392 553L383 567Z" />
      </svg>
    </div>
  )
}

function Canvas() {
  return (
    <div className="relative min-w-0 flex-1 bg-white">
      <Grid />
      <div className="absolute left-[144px] top-[95px] flex h-[62px] w-[93px] items-center justify-center rounded-lg border border-[#f0c800] bg-white pt-1 text-xl font-bold text-[#0aa8dc]">
        开始
      </div>
      <div className="absolute left-[321px] top-[96px] h-[62px] w-[93px] rounded-lg border border-[#f0c800] bg-white" />
      <div className="absolute left-[511px] top-[95px] h-[62px] w-[93px] rounded-lg border border-[#f0c800] bg-white" />
      <SelectedArrow />
      <StylePopup />
      <div className="absolute bottom-0 right-0 flex h-[30px] w-12 items-center justify-center gap-1.5 border border-[#aaa] bg-[#f0f0f0]">
        <button aria-label="平移">
          <Icon size="h-3.5 w-3.5" box="0 0 14 14">
            <path d="M7 2V12M2 7H12" stroke="#444" strokeWidth="1.800" />
            <path d="M7 0L9.500 3.500H4.500ZM7 14L9.500 10.500H4.500ZM0 7L3.500 4.500V9.500ZM14 7L10.500 4.500V9.500Z" fill="#444" />
          </Icon>
        </button>
        <button aria-label="缩放">
          <Icon size="h-3.5 w-3.5" box="0 0 14 14">
            <circle cx="5.500" cy="5.500" r="4.800" stroke="#444" />
            <path d="M9 9L13.500 13" stroke="#444" strokeWidth="2.200" />
          </Icon>
        </button>
      </div>
    </div>
  )
}

function OutlinePanel() {
  return (
    <aside className="flex w-[196px] shrink-0 flex-col border border-[#aaa] bg-white">
      <div className="flex h-[25px] shrink-0 items-center justify-between border-b border-[#aaa] bg-[#e0e0e0] pl-1 pr-[10px] text-[#444]">
        <h2 className="pt-0.5">大纲</h2>
        <button aria-label="固定">
          <Icon size="h-3 w-[10px]" box="0 0 10 12">
            <path d="M2.500 7V.7H7.500V7M.5 7.500H9.500M5 8V12" stroke="#333" />
            <path d="M6 1H7.500V7H6Z" fill="#333" />
          </Icon>
        </button>
      </div>
      <div className="flex h-[35px] shrink-0 items-center border-b border-[#aaa] bg-[#f0f0f0] pl-[5px]">
        <span className="flex flex-col gap-px">
          <i className="h-1 w-1 rounded-full bg-[#333]" />
          <i className="h-1 w-1 rounded-full bg-[#333]" />
          <i className="h-1 w-1 rounded-full bg-[#333]" />
        </span>
        <button aria-label="自动整理" className="ml-[11px] flex h-[26px] w-[26px] flex-col items-center justify-center bg-[#2a579a] text-[#f09a45]">
          <span className="text-[6px] leading-[6px]">AUTO</span>
          <Icon size="h-3 w-4" box="0 0 16 12">
            <path d="M.5 4.500Q8-1.500 15.500 4.500L10.500 10Q8 8.500 5.500 10ZM8 9L4 3.500M5.500 10Q8 12.500 10.500 10" stroke="#e8933f" />
          </Icon>
        </button>
        <button aria-label="关系视图" className="ml-[9px]">
          <Icon size="h-4 w-4" box="0 0 16 16">
            <path d="M12.500 3L3.500 7.500L12.500 13" stroke="#f59a3c" strokeWidth="1.500" />
            <circle cx="2" cy="8" r="1.500" fill="#fff" stroke="#f59a3c" strokeWidth="1.200" />
            <circle cx="14" cy="2.500" r="1.500" fill="#fff" stroke="#f59a3c" strokeWidth="1.200" />
            <circle cx="14" cy="13.500" r="1.500" fill="#fff" stroke="#f59a3c" strokeWidth="1.200" />
          </Icon>
        </button>
        <span className="ml-2 h-7 w-px bg-[#aaa]" />
        <button aria-label="刷新" className="ml-2">
          <Icon size="h-4 w-4" box="0 0 16 16">
            <path d="M1.500 7Q3 1.500 8 1.500Q11.500 1.500 13.500 5M14.500 9Q13 14.500 8 14.500Q4.500 14.500 2.500 11" stroke="#4a80b8" strokeWidth="2" />
            <path d="M15.500 2V7H10.500ZM.5 14V9H5.500Z" fill="#4a80b8" />
          </Icon>
        </button>
        <button aria-label="更多" className="ml-auto mr-1">
          <Icon size="h-2 w-2" box="0 0 8 8"><path d="M0 0H8V1H0ZM0 2.500H8L4 8Z" fill="#999" /></Icon>
        </button>
      </div>
      <div className="flex flex-1 pt-[3px]">
        <div className="ml-[10px] w-[11px] shrink-0">
          {outline.map((item, i) => (
            <div key={item.id} className="h-[27px]">
              <div className={`h-3.5 border-b border-[#aaa] ${i > 0 ? 'border-l' : ''}`} />
              <div className={`h-[13px] border-[#aaa] ${i < 4 ? 'border-l' : ''}`} />
            </div>
          ))}
        </div>
        <ul className="flex-1">
          {outline.map((item) => (
            <li key={item.id} className="mb-px flex h-[26px] items-center bg-gradient-to-r from-[#f0f8ff] via-[#f6f6f6] to-white pl-[10px]">
              <span className={`h-[18px] border px-1 leading-[18px] ${item.look}`}>{item.text}</span>
            </li>
          ))}
        </ul>
      </div>
      <p className="flex h-[26px] shrink-0 items-center gap-3 whitespace-nowrap bg-[#e0e0e0] pl-14 pt-0.5 text-[#444]">
        <span>图形: 5</span>
        <span>连接: 0</span>
      </p>
    </aside>
  )
}

function Watermark() {
  return (
    <div className="pointer-events-none absolute bottom-2 right-[10px] flex items-center opacity-70">
      <svg className="h-11 w-11" viewBox="0 0 132 132" aria-hidden>
        <path d="M2 92C0 50 50 20 98 14C64 28 34 48 32 72C32 90 52 90 70 82C50 104 20 108 2 92Z" fill="#3b8bd0" />
        <path d="M34 52C60 22 96 8 118 34C104 26 80 28 60 44C46 54 38 66 34 52Z" fill="#5fa8e0" />
        <path d="M122 42C134 76 104 112 14 126C50 112 84 98 92 74C96 58 82 52 66 56C82 38 108 34 122 42Z" fill="#4db53c" />
        <path d="M40 66C52 46 82 42 88 60C90 76 70 90 52 88C66 80 74 70 66 64C58 60 50 64 40 66Z" fill="#7cc8e8" />
      </svg>
      <div className="flex flex-col whitespace-nowrap">
        <span className="text-[21px] font-bold leading-6 text-[#3f86cc]">极光下载站</span>
        <span className="text-sm font-bold leading-4 text-[#159a84] opacity-60">www.xz7.com</span>
      </div>
    </div>
  )
}

export default function App() {
  return (
    <div className="relative flex h-screen flex-col overflow-hidden bg-[#2a579a] font-['Open_Sans','Noto_Sans_CJK_SC',sans-serif] text-xs">
      <Header />
      <Ribbon />
      <main className="mx-px flex min-h-0 flex-1 gap-1 border-b border-[#aaa] bg-white pb-0.5 pl-[3px] pr-[3px] pt-[3px]">
        <div className="flex min-w-0 flex-1 gap-[3px] border border-[#2a579a] p-1">
          <Library />
          <div className="flex min-w-0 flex-1 flex-col">
            <div className="pl-[22px]">
              <TopRuler />
            </div>
            <div className="flex min-h-0 flex-1">
              <SideRuler />
              <Canvas />
            </div>
          </div>
        </div>
        <OutlinePanel />
      </main>
      <footer className="flex h-[25px] shrink-0 items-center justify-between bg-[#0063c6] pl-[11px] pr-[11px] text-white">
        <span>就绪</span>
        <span>版本：1.7.8346.22893</span>
      </footer>
      <Watermark />
    </div>
  )
}
